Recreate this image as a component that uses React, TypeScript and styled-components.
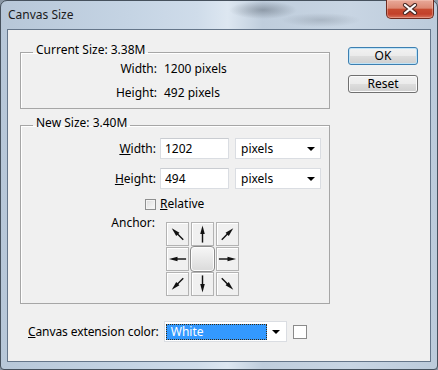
import React from 'react';
import styled, { createGlobalStyle } from 'styled-components';

const GlobalStyle = createGlobalStyle`
  html, body {
    margin: 0;
    padding: 0;
  }
  body {
    width: 438px;
    height: 370px;
    overflow: hidden;
    font-family: 'Noto Sans', 'Open Sans', sans-serif;
    font-size: 12px;
    color: #000;
    background: #8a97a5;
  }
`;

const Window = styled.div`
  box-sizing: border-box;
  width: 438px;
  height: 370px;
  display: flex;
  flex-direction: column;
  padding: 0 6px 7px;
  border: 1px solid #46515d;
  border-radius: 7px 7px 4px 4px;
  background:
    radial-gradient(ellipse 34px 9px at 262px 9px, rgba(70, 80, 92, 0.4), transparent),
    radial-gradient(ellipse 40px 7px at 320px 19px, rgba(90, 100, 112, 0.25), transparent),
    linear-gradient(90deg, #b7c7d8 0%, #c5d4e4 30%, #cfdcea 45%, #dde7f1 52%, #bfcddc 60%, #c8d5e3 80%, #bccbdb 100%);
`;

const TitleBar = styled.div`
  height: 28px;
  flex-shrink: 0;
  display: flex;
  align-items: flex-start;
  justify-content: space-between;
`;

const Title = styled.span`
  padding: 7px 0 0 1px;
  line-height: 14px;
  color: #1b1b1b;
`;

const CloseButton = styled.div`
  box-sizing: border-box;
  width: 48px;
  height: 19px;
  margin: -1px -3px 0 0;
  display: flex;
  align-items: center;
  justify-content: center;
  border: 1px solid #6e2b20;
  border-top: none;
  border-radius: 0 0 5px 5px;
  background: linear-gradient(#e8a999 0%, #dc8873 45%, #c64a30 52%, #c2402a 78%, #d7735c 100%);
  box-shadow: inset 0 0 0 1px rgba(255, 220, 210, 0.35);
`;

const Client = styled.div`
  flex: 1;
  display: flex;
  align-items: flex-start;
  padding: 12px 0 0 12px;
  border: 1px solid #65768a;
  background: #f0f0f0;
`;

const LeftColumn = styled.div`
  width: 310px;
  display: flex;
  flex-direction: column;
`;

const Group = styled.fieldset<{ $spaced?: boolean }>`
  margin: ${(p) => (p.$spaced ? '6px 0 0' : '0')};
  padding: 0;
  min-width: 0;
  border: 1px solid #a6a6a6;
  box-shadow: inset 1px 1px 0 #fff;
`;

const Legend = styled.legend`
  margin-left: 12px;
  padding: 0 3px 4px;
  line-height: 16px;
`;

const InfoGrid = styled.div`
  display: grid;
  grid-template-columns: 136px auto;
  column-gap: 7px;
  row-gap: 10px;
  line-height: 14px;
  padding-bottom: 8px;
`;

const InfoLabel = styled.span`
  text-align: right;
`;

const GroupBody = styled.div`
  display: flex;
  flex-direction: column;
  padding: 3px 0 7px;
`;

const FieldRow = styled.div`
  display: flex;
  align-items: center;
  height: 21px;
  & + & {
    margin-top: 9px;
  }
`;

const FieldLabel = styled.label<{ $width?: number }>`
  width: ${(p) => p.$width ?? 135}px;
  flex-shrink: 0;
  text-align: right;
  line-height: 14px;
`;

const TextBox = styled.input`
  box-sizing: border-box;
  width: 69px;
  height: 21px;
  margin: 0 0 0 4px;
  padding: 0 4px;
  border: 1px solid #dadde2;
  border-top-color: #c9ccd1;
  background: #fff;
  font: inherit;
  color: #000;
  outline: none;
`;

const Dropdown = styled.div<{ $width: number }>`
  box-sizing: border-box;
  width: ${(p) => p.$width}px;
  height: 21px;
  display: flex;
  align-items: center;
  justify-content: space-between;
  border: 1px solid #dadde2;
  background: #fff;
`;

const UnitDropdown = styled(Dropdown)`
  margin-left: 6px;
  padding: 0 5px 0 5px;
`;

const DropArrow = styled.span`
  width: 0;
  height: 0;
  border-left: 4px solid transparent;
  border-right: 4px solid transparent;
  border-top: 4px solid #000;
`;

const CheckRow = styled.label`
  display: flex;
  align-items: center;
  height: 16px;
  margin-top: 7px;
  padding-left: 124px;
  line-height: 14px;
`;

const CheckBox = styled.span`
  box-sizing: border-box;
  width: 11px;
  height: 11px;
  margin-right: 4px;
  border: 1px solid #8e8f8f;
  background: linear-gradient(135deg, #dcdcdc, #fbfbfb);
  box-shadow: inset 0 0 0 1px #f4f4f4;
`;

const AnchorRow = styled.div`
  display: flex;
  align-items: flex-start;
  margin-top: 4px;
`;

const AnchorGrid = styled.div`
  margin: 6px 0 0 11px;
  display: grid;
  grid-template-columns: repeat(3, 23px);
  grid-template-rows: repeat(3, 24px);
  column-gap: 2px;
  row-gap: 1px;
`;

const AnchorCell = styled.div<{ $selected?: boolean }>`
  box-sizing: border-box;
  display: flex;
  align-items: center;
  justify-content: center;
  overflow: hidden;
  border: 1px solid ${(p) => (p.$selected ? '#8c8c8c' : '#b3b3b3')};
  border-radius: ${(p) => (p.$selected ? '4px' : '0')};
  background: ${(p) => (p.$selected ? 'linear-gradient(#f7f7f7, #dadada)' : '#f0f0f0')};
  box-shadow: ${(p) => (p.$selected ? 'inset 0 0 0 1px #fdfdfd' : 'inset 1px 1px 0 #fff')};
  margin: ${(p) => (p.$selected ? '-1px -1px' : '0')};
`;

const BottomRow = styled.div`
  display: flex;
  align-items: center;
  height: 21px;
  margin-top: 17px;
  padding-left: 8px;
`;

const BottomLabel = styled.label`
  white-space: nowrap;
  line-height: 14px;
  letter-spacing: -0.1px;
`;

const ColorDropdown = styled(Dropdown)`
  margin-left: 5px;
  padding: 2px 0 2px 1px;
`;

const Highlight = styled.span`
  box-sizing: border-box;
  width: 102px;
  height: 16px;
  display: flex;
  align-items: center;
  padding-left: 4px;
  border: 1px dotted #3b2a10;
  background: #3399ff;
  color: #fff;
`;

const ArrowSlot = styled.span`
  width: 19px;
  display: flex;
  justify-content: center;
`;

const Swatch = styled.span`
  box-sizing: border-box;
  width: 14px;
  height: 14px;
  margin-left: 6px;
  border: 1px solid #8a8a8a;
  background: #fff;
`;

const RightColumn = styled.div`
  margin-left: 18px;
  padding-top: 5px;
  display: flex;
  flex-direction: column;
  gap: 10px;
`;

const Button = styled.button<{ $default?: boolean }>`
  box-sizing: border-box;
  width: 70px;
  height: 18px;
  padding: 0;
  border: 1px solid ${(p) => (p.$default ? '#3c7fb1' : '#707070')};
  border-radius: 3px;
  background: linear-gradient(#f2f2f2 0%, #ebebeb 48%, #dddddd 52%, #cfcfcf 100%);
  box-shadow: inset 0 0 0 1px ${(p) => (p.$default ? '#bfe3f7' : '#fbfbfb')};
  font: inherit;
  line-height: 14px;
  color: #000;
`;

// straight arrows run almost the full cell, diagonals a bit less
function Arrow({ angle }: { angle: number }) {
  const diagonal = angle % 90 !== 0;
  const tail = diagonal ? 19.5 : 20;
  const tip = diagonal ? 2.5 : 2;
  return (
    <svg width="22" height="22" viewBox="0 0 22 22">
      <g transform={`rotate(${angle} 11 11)`}>
        <line x1="11" y1={tail} x2="11" y2={tip + 6} stroke="#111" strokeWidth="1.5" />
        <polygon points={`11,${tip} 8.6,${tip + 9} 13.4,${tip + 9}`} fill="#111" />
      </g>
    </svg>
  );
}

const anchorAngles = [-45, 0, 45, -90, null, 90, -135, 180, 135];

export default function App() {
  return (
    <>
      <GlobalStyle />
      <Window>
        <TitleBar>
          <Title>Canvas Size</Title>
          <CloseButton>
            <svg width="16" height="12" viewBox="0 0 16 12">
              <path d="M3 2 L13 10 M13 2 L3 10" stroke="#4a2a26" strokeWidth="4.2" strokeLinecap="round" />
              <path d="M3 2 L13 10 M13 2 L3 10" stroke="#fff" strokeWidth="2.2" strokeLinecap="round" />
            </svg>
          </CloseButton>
        </TitleBar>
        <Client>
          <LeftColumn>
            <Group>
              <Legend>Current Size: 3.38M</Legend>
              <InfoGrid>
                <InfoLabel>Width:</InfoLabel>
                <span>1200 pixels</span>
                <InfoLabel>Height:</InfoLabel>
                <span>492 pixels</span>
              </InfoGrid>
            </Group>
            <Group $spaced>
              <Legend>New Size: 3.40M</Legend>
              <GroupBody>
                <FieldRow>
                  <FieldLabel>
                    <u>W</u>idth:
                  </FieldLabel>
                  <TextBox defaultValue="1202" />
                  <UnitDropdown $width={86}>
                    pixels
                    <DropArrow />
                  </UnitDropdown>
                </FieldRow>
                <FieldRow>
                  <FieldLabel>
                    <u>H</u>eight:
                  </FieldLabel>
                  <TextBox defaultValue="494" />
                  <UnitDropdown $width={86}>
                    pixels
                    <DropArrow />
                  </UnitDropdown>
                </FieldRow>
                <CheckRow>
                  <CheckBox />
                  <span>
                    <u>R</u>elative
                  </span>
                </CheckRow>
                <AnchorRow>
                  <FieldLabel $width={134}>Anchor:</FieldLabel>
                  <AnchorGrid>
                    {anchorAngles.map((a, i) =>
                      a === null ? (
                        <AnchorCell key={i} $selected />
                      ) : (
                        <AnchorCell key={i}>
                          <Arrow angle={a} />
                        </AnchorCell>
                      )
                    )}
                  </AnchorGrid>
                </AnchorRow>
              </GroupBody>
            </Group>
            <BottomRow>
              <BottomLabel>
                <u>C</u>anvas extension color:
              </BottomLabel>
              <ColorDropdown $width={123}>
                <Highlight>White</Highlight>
                <ArrowSlot>
                  <DropArrow />
                </ArrowSlot>
              </ColorDropdown>
              <Swatch />
            </BottomRow>
          </LeftColumn>
          <RightColumn>
            <Button $default>OK</Button>
            <Button>Reset</Button>
          </RightColumn>
        </Client>
      </Window>
    </>
  );
}
